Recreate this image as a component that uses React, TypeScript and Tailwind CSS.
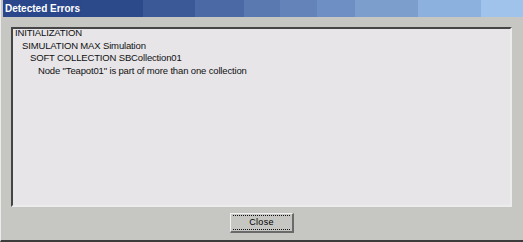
export default function App() {
  // error tree, indent level per line
  const lines = [
    { depth: 0, text: "INITIALIZATION" },
    { depth: 1, text: "SIMULATION MAX Simulation" },
    { depth: 2, text: "SOFT COLLECTION SBCollection01" },
    { depth: 3, text: 'Node "Teapot01" is part of more than one collection' },
  ];
  const indent = ["pl-[1px]", "pl-[8px]", "pl-[16px]", "pl-[24px]"];

  return (
    <div className="w-[523px] h-[242px] flex flex-col bg-[#c6c6c2] border-l border-[#ececec] border-b-2 border-b-[#3c3c3c] font-['Liberation_Sans',Arial,sans-serif] overflow-hidden">
      {/* Title bar */}
      <div className="h-[17px] ml-[2px] pl-[2px] pt-[1px] leading-[16px] text-[10px] font-bold text-white bg-[linear-gradient(to_right,#29478a_0_78px,#2c4a89_78px_140px,#3a5996_140px_192px,#4a69a5_192px_241px,#5a79b0_241px_277px,#6483b8_277px_314px,#6e8fc4_314px_352px,#7c9ecd_352px_415px,#8db1de_415px_478px,#a0c3ec_478px)]">
        Detected Errors
      </div>

      {/* Error list */}
      <div className="mt-[10px] ml-[10px] mr-[11px] h-[180px] bg-[#e7e5e8] border-t-2 border-l-2 border-t-[#454545] border-l-[#454545] border-r-2 border-b-2 border-r-[#ececec] border-b-[#ececec] overflow-hidden">
        <div className="-mt-[2px] pl-[1px] text-[9.5px] leading-[12.7px] tracking-[-0.15px] text-[#111]">
          {lines.map((l) => (
            <div key={l.text} className={indent[l.depth]}>
              {l.text}
            </div>
          ))}
        </div>
      </div>

      {/* Close button */}
      <div className="flex justify-center mt-[6px]">
        <button className="w-[64px] h-[20px] bg-[#c6c6c2] border-t border-l border-[#f2f2f2] border-r-2 border-b-2 border-r-[#6a6a6a] border-b-[#6a6a6a] flex items-center justify-center px-[2px]">
          <div className="w-full h-[15px] border-t border-b border-dotted border-[#111] text-[9px] leading-[13px] text-black tracking-[0.3px]">
            Close
          </div>
        </button>
      </div>
    </div>
  );
}
